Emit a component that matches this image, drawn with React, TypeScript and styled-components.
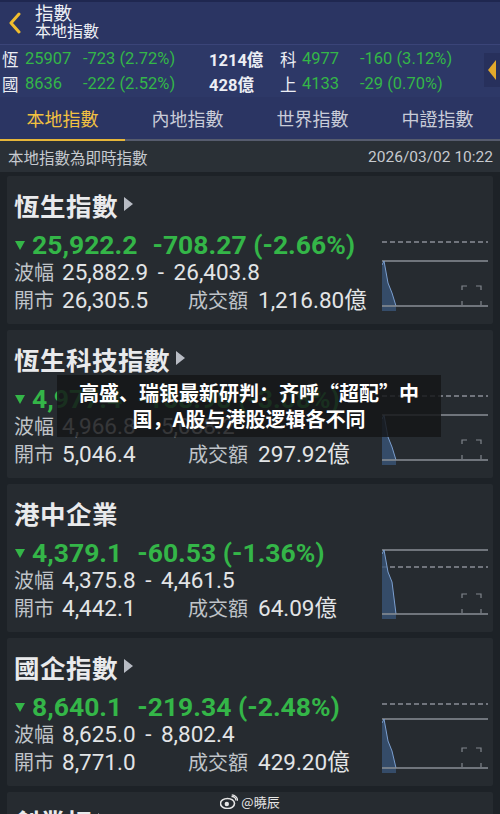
import styled, { createGlobalStyle } from "styled-components";

const GlobalStyle = createGlobalStyle`
  html, body {
    margin: 0;
    padding: 0;
    background: #1d2227;
  }
  body {
    font-family: Roboto, "Noto Sans CJK TC", sans-serif;
    color: #e4e6e8;
  }
  * { box-sizing: border-box; }
`;

const Page = styled.div`
  position: relative;
  width: 500px;
  height: 814px;
  overflow: hidden;
  background: #1d2227;
`;

const TopBar = styled.div`
  display: flex;
  align-items: center;
  height: 44px;
  background: #2b3563;
  border-top: 2px solid #1f2750;
  padding-left: 8px;
`;

const BackButton = styled.div`
  width: 24px;
  display: flex;
  align-items: center;
`;

const TitleBlock = styled.div`
  display: flex;
  flex-direction: column;
  margin-left: 3px;
  line-height: 1.05;
  color: #eef0f6;
  h1 {
    margin: 0;
    font-size: 18.5px;
    font-weight: 400;
  }
  span {
    font-size: 16px;
  }
`;

const QuoteStrip = styled.div`
  position: relative;
  height: 53px;
  background: #2d3867;
  border-top: 1px solid #3a4478;
  padding-top: 1px;
`;

const QuoteRow = styled.div`
  display: grid;
  grid-template-columns: 23px 58px 126px 71px 22px 58px 1fr;
  align-items: center;
  height: 25px;
  font-size: 16.5px;
  padding-left: 2px;
`;

const Cell = styled.span<{ $tone?: "green" | "white" | "bold" }>`
  white-space: nowrap;
  color: ${(p) => (p.$tone === "green" ? "#34b648" : "#eceef4")};
  font-weight: ${(p) => (p.$tone === "bold" ? 700 : 400)};
`;

const SideHandle = styled.div`
  position: absolute;
  right: 0;
  top: 8px;
  width: 16px;
  height: 34px;
  display: flex;
  align-items: center;
  justify-content: center;
  background: #27305c;
`;

const Tabs = styled.div`
  display: grid;
  grid-template-columns: repeat(4, 1fr);
  height: 44px;
  background: #2b3563;
  border-bottom: 2px solid #565c6e;
`;

const Tab = styled.div<{ $active?: boolean }>`
  display: flex;
  align-items: center;
  justify-content: center;
  padding-bottom: 3px;
  font-size: 18px;
  color: ${(p) => (p.$active ? "#f2c141" : "#c9ccd8")};
  box-shadow: ${(p) => (p.$active ? "inset 0 -2px 0 #e6b63a" : "none")};
  margin-bottom: -2px;
`;

const StatusBar = styled.div`
  display: flex;
  justify-content: space-between;
  align-items: center;
  height: 31px;
  padding: 0 7px 0 8px;
  background: #2a3036;
  font-size: 15.5px;
  color: #c6cacf;
`;

const CardList = styled.div`
  display: flex;
  flex-direction: column;
  gap: 6px;
  padding: 4px 7px 0;
`;

const Card = styled.div`
  display: flex;
  height: 148px;
  background: #262b30;
  border-radius: 2px;
  flex-shrink: 0;
`;

const CardInfo = styled.div`
  flex: 1;
  padding: 13px 0 0 7px;
`;

const CardTitle = styled.div`
  display: flex;
  align-items: center;
  height: 30px;
  font-size: 25.5px;
  font-weight: 700;
  color: #e9eaec;
  letter-spacing: 0.5px;
`;

const TitleArrow = styled.span`
  margin-left: 6px;
  width: 0;
  height: 0;
  border-top: 7px solid transparent;
  border-bottom: 7px solid transparent;
  border-left: 9px solid #b8bcc4;
`;

const PriceRow = styled.div`
  display: flex;
  align-items: center;
  height: 28px;
  margin-top: 11px;
  font-size: 26.5px;
  font-weight: 700;
  color: #34b648;
  white-space: nowrap;
`;

const DownMark = styled.span`
  width: 0;
  height: 0;
  margin: 2px 7px 0 1px;
  border-left: 5.5px solid transparent;
  border-right: 5.5px solid transparent;
  border-top: 9px solid #34b648;
`;

const Change = styled.span`
  margin-left: 15px;
`;

const StatRow = styled.div`
  height: 28px;
  line-height: 28px;
  white-space: nowrap;
`;

const StatLabel = styled.span<{ $gap?: number }>`
  display: inline-block;
  font-size: 20px;
  color: #bfc3c8;
  margin-right: ${(p) => p.$gap ?? 8}px;
`;

const StatValue = styled.span<{ $w?: number }>`
  display: inline-block;
  font-size: 22.5px;
  color: #e2e4e6;
  word-spacing: 4px;
  width: ${(p) => (p.$w ? `${p.$w}px` : "auto")};
`;

const ChartBox = styled.div`
  width: 106px;
  margin: 60px 5px 0 0;
`;

const Overlay = styled.div`
  position: absolute;
  left: 57px;
  top: 375px;
  width: 384px;
  height: 62px;
  background: rgba(20, 22, 24, 0.84);
  display: flex;
  align-items: center;
  justify-content: center;
  text-align: center;
  color: #ffffff;
  font-family: "Noto Sans CJK SC", sans-serif;
  font-weight: 700;
  font-size: 20px;
  line-height: 26px;
  white-space: nowrap;
`;

const Watermark = styled.div`
  position: absolute;
  left: 0;
  right: 0;
  top: 792px;
  display: flex;
  justify-content: center;
  align-items: center;
  gap: 3px;
  font-family: "Noto Sans CJK SC", sans-serif;
  font-size: 13px;
  color: #e6e6e6;
`;

type Index = {
  name: string;
  arrow: boolean;
  price: string;
  change: string;
  range: string;
  open: string;
  turnover: string;
  dashedAbove: boolean;
  gap: number;
};

const indices: Index[] = [
  { name: "恆生指數", arrow: true, price: "25,922.2", change: "-708.27 (-2.66%)", range: "25,882.9 - 26,403.8", open: "26,305.5", turnover: "1,216.80億", dashedAbove: true, gap: 19 },
  { name: "恆生科技指數", arrow: true, price: "4,977.4", change: "-158.98 (-3.08%)", range: "4,966.8 - 5,088.2", open: "5,046.4", turnover: "297.92億", dashedAbove: true, gap: 19 },
  { name: "港中企業", arrow: false, price: "4,379.1", change: "-60.53 (-1.36%)", range: "4,375.8 - 4,461.5", open: "4,442.1", turnover: "64.09億", dashedAbove: false, gap: 17 },
  { name: "國企指數", arrow: true, price: "8,640.1", change: "-219.34 (-2.48%)", range: "8,625.0 - 8,802.4", open: "8,771.0", turnover: "429.20億", dashedAbove: true, gap: 15 },
  { name: "創業板", arrow: true, price: "", change: "", range: "", open: "", turnover: "", dashedAbove: true, gap: 15 },
];

const MiniChart = ({ dashedAbove, gap }: { dashedAbove: boolean; gap: number }) => {
  const dashY = dashedAbove ? 6 : 6 + gap;
  const topY = dashedAbove ? 6 + gap : 6;
  const bottomY = 70;
  return (
    <svg width="106" height="78" viewBox="0 0 106 78">
      <line x1="0" y1={dashY} x2="106" y2={dashY} stroke="#8a8f96" strokeWidth="1.5" strokeDasharray="5 3" />
      <line x1="0" y1={topY} x2="106" y2={topY} stroke="#8a8f96" strokeWidth="1.5" />
      <path
        d={`M0 ${bottomY + 5} L0 ${topY + 4} L2 ${topY} L6 ${topY + 22} L10 ${topY + 32} L14 ${bottomY} L14 ${bottomY + 5} Z`}
        fill="#3a5578"
        opacity="0.8"
      />
      <path d={`M0 ${topY + 4} L2 ${topY} L6 ${topY + 22} L10 ${topY + 32} L14 ${bottomY}`} fill="none" stroke="#7b9fd0" strokeWidth="1" />
      <line x1="0" y1={bottomY} x2="106" y2={bottomY} stroke="#8a8f96" strokeWidth="1.5" />
      <path
        d={`M80 ${bottomY - 16} V${bottomY - 20} H85 M94 ${bottomY - 20} H99 V${bottomY - 16} M99 ${bottomY - 5} V${bottomY - 1} M80 ${bottomY - 5} V${bottomY - 1}`}
        fill="none"
        stroke="#80858c"
        strokeWidth="1.2"
      />
    </svg>
  );
};

const WeiboLogo = () => (
  <svg width="18" height="15" viewBox="0 0 18 15">
    <ellipse cx="7.5" cy="9.5" rx="7" ry="5" fill="none" stroke="#e6e6e6" strokeWidth="1.6" />
    <circle cx="6.8" cy="10" r="2.2" fill="#e6e6e6" />
    <path d="M11.5 2.5 A4 4 0 0 1 16 6.5" fill="none" stroke="#e6e6e6" strokeWidth="1.4" />
    <path d="M11.8 0.8 A6 6 0 0 1 17.6 6.8" fill="none" stroke="#e6e6e6" strokeWidth="1.2" />
  </svg>
);

const App = () => {
  return (
    <Page>
      <GlobalStyle />
      <TopBar>
        <BackButton>
          <svg width="14" height="22" viewBox="0 0 14 22">
            <path d="M11 2 L3 11 L11 20" fill="none" stroke="#f0bd2e" strokeWidth="3" strokeLinecap="round" strokeLinejoin="round" />
          </svg>
        </BackButton>
        <TitleBlock>
          <h1>指數</h1>
          <span>本地指數</span>
        </TitleBlock>
      </TopBar>

      <QuoteStrip>
        <QuoteRow>
          <Cell>恆</Cell>
          <Cell $tone="green">25907</Cell>
          <Cell $tone="green">-723 (2.72%)</Cell>
          <Cell $tone="bold">1214億</Cell>
          <Cell>科</Cell>
          <Cell $tone="green">4977</Cell>
          <Cell $tone="green">-160 (3.12%)</Cell>
        </QuoteRow>
        <QuoteRow>
          <Cell>國</Cell>
          <Cell $tone="green">8636</Cell>
          <Cell $tone="green">-222 (2.52%)</Cell>
          <Cell $tone="bold">428億</Cell>
          <Cell>上</Cell>
          <Cell $tone="green">4133</Cell>
          <Cell $tone="green">-29 (0.70%)</Cell>
        </QuoteRow>
        <SideHandle>
          <svg width="9" height="20" viewBox="0 0 9 20">
            <path d="M8 0 L0 10 L8 20 Z" fill="#e2a92c" />
          </svg>
        </SideHandle>
      </QuoteStrip>

      <Tabs>
        <Tab $active>本地指數</Tab>
        <Tab>內地指數</Tab>
        <Tab>世界指數</Tab>
        <Tab>中證指數</Tab>
      </Tabs>

      <StatusBar>
        <span>本地指數為即時指數</span>
        <span>2026/03/02 10:22</span>
      </StatusBar>

      <CardList>
        {indices.map((item) => (
          <Card key={item.name}>
            <CardInfo>
              <CardTitle>
                {item.name}
                {item.arrow && <TitleArrow />}
              </CardTitle>
              {item.price && (
                <>
                  <PriceRow>
                    <DownMark />
                    {item.price}
                    <Change>{item.change}</Change>
                  </PriceRow>
                  <StatRow>
                    <StatLabel>波幅</StatLabel>
                    <StatValue>{item.range}</StatValue>
                  </StatRow>
                  <StatRow>
                    <StatLabel>開市</StatLabel>
                    <StatValue $w={126}>{item.open}</StatValue>
                    <StatLabel $gap={10}>成交額</StatLabel>
                    <StatValue>{item.turnover}</StatValue>
                  </StatRow>
                </>
              )}
            </CardInfo>
            {item.price && (
              <ChartBox>
                <MiniChart dashedAbove={item.dashedAbove} gap={item.gap} />
              </ChartBox>
            )}
          </Card>
        ))}
      </CardList>

      <Overlay>
        高盛、瑞银最新研判：齐呼“超配”中
        <br />
        国，A股与港股逻辑各不同
      </Overlay>

      <Watermark>
        <WeiboLogo />
        <span>@曉辰</span>
      </Watermark>
    </Page>
  );
};

export default App;
